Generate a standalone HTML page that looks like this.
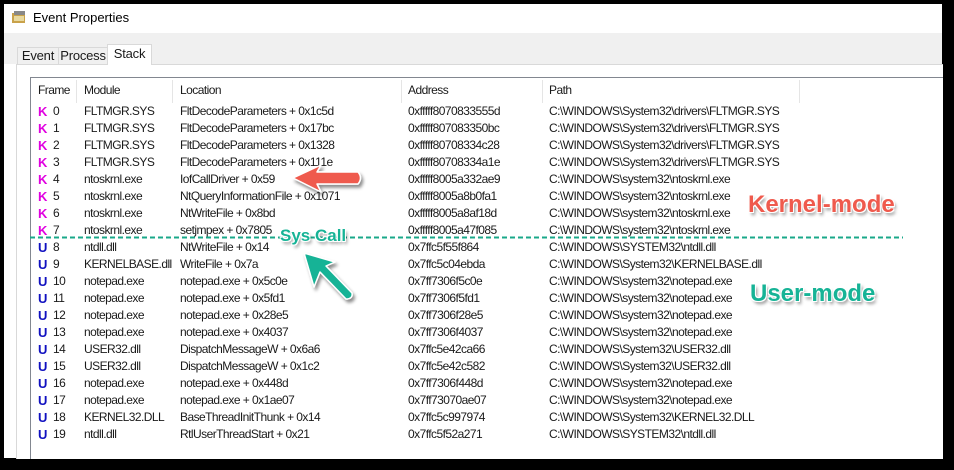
<!DOCTYPE html>
<html><head><style>
body{margin:0;width:954px;height:470px;background:#000;position:relative;overflow:hidden;font-family:"Liberation Sans",sans-serif;font-size:12px;color:#1a1a1a}
.win{position:absolute;left:4px;top:4px;width:938px;height:454px;background:#fff}
.gray{position:absolute;left:4px;top:33px;width:938px;height:31px;background:#f0f0f0}
.t{position:absolute;white-space:nowrap}
.tab{position:absolute;border:1px solid #d9d9d9;border-bottom:none;background:#f0f0f0;font-size:13px;text-align:center;box-sizing:border-box;letter-spacing:-0.2px}
.panel{position:absolute;left:16px;top:64px;width:926px;height:394px;background:#fff;border-top:1px solid #d9d9d9;border-left:1px solid #d9d9d9}
.list{position:absolute;left:30px;top:77px;width:912px;height:381px;border-top:1px solid #828790;border-left:1px solid #828790;background:#fff}
.sep{position:absolute;top:80px;width:1px;height:23px;background:#e5e5e5}
.r{position:absolute;height:17px;line-height:17px;letter-spacing:-0.55px;white-space:nowrap}
.K{color:#e000e0;font-weight:bold;font-size:13px;letter-spacing:0}
.U{color:#1010c0;font-weight:bold;font-size:13px;letter-spacing:0}
.lab{position:absolute;font-weight:bold;font-family:"Liberation Sans",sans-serif;white-space:nowrap;text-shadow:1px 1px 0 #fff,-1px -1px 0 #fff,1px -1px 0 #fff,-1px 1px 0 #fff,2px 3px 3px rgba(0,0,0,.45)}
</style></head><body>
<div class="win"></div>
<div class="gray"></div>
<svg style="position:absolute;left:11px;top:10px" width="16" height="14"><rect x="1" y="3" width="13" height="10" fill="#c9a24a"/><rect x="3" y="1" width="11" height="4" fill="#888"/><rect x="3" y="6" width="10" height="5" fill="#e8d9a0"/></svg>
<div class="t" style="left:33px;top:10px;font-size:13px;color:#000">Event Properties</div>
<div class="tab" style="left:17px;top:47px;width:42px;height:17px;line-height:16px">Event</div>
<div class="tab" style="left:58px;top:47px;width:50px;height:17px;line-height:16px">Process</div>
<div class="tab" style="left:107px;top:44px;width:45px;height:21px;line-height:18px;background:#fff;z-index:2">Stack</div>
<div class="panel"></div>
<div class="list"></div>
<div class="sep" style="left:76px"></div><div class="sep" style="left:172px"></div><div class="sep" style="left:401px"></div><div class="sep" style="left:542px"></div><div class="sep" style="left:799px"></div>
<div class="r" style="top:82px;left:38px">Frame</div>
<div class="r" style="top:82px;left:84px">Module</div>
<div class="r" style="top:82px;left:180px">Location</div>
<div class="r" style="top:82px;left:408px">Address</div>
<div class="r" style="top:82px;left:549px">Path</div>
<div id="rows"></div>
<script>
var d=[
["K","FLTMGR.SYS","FltDecodeParameters + 0x1c5d","0xfffff8070833555d","C:\\WINDOWS\\System32\\drivers\\FLTMGR.SYS"],
["K","FLTMGR.SYS","FltDecodeParameters + 0x17bc","0xfffff807083350bc","C:\\WINDOWS\\System32\\drivers\\FLTMGR.SYS"],
["K","FLTMGR.SYS","FltDecodeParameters + 0x1328","0xfffff80708334c28","C:\\WINDOWS\\System32\\drivers\\FLTMGR.SYS"],
["K","FLTMGR.SYS","FltDecodeParameters + 0x111e","0xfffff80708334a1e","C:\\WINDOWS\\System32\\drivers\\FLTMGR.SYS"],
["K","ntoskrnl.exe","IofCallDriver + 0x59","0xfffff8005a332ae9","C:\\WINDOWS\\system32\\ntoskrnl.exe"],
["K","ntoskrnl.exe","NtQueryInformationFile + 0x1071","0xfffff8005a8b0fa1","C:\\WINDOWS\\system32\\ntoskrnl.exe"],
["K","ntoskrnl.exe","NtWriteFile + 0x8bd","0xfffff8005a8af18d","C:\\WINDOWS\\system32\\ntoskrnl.exe"],
["K","ntoskrnl.exe","setjmpex + 0x7805","0xfffff8005a47f085","C:\\WINDOWS\\system32\\ntoskrnl.exe"],
["U","ntdll.dll","NtWriteFile + 0x14","0x7ffc5f55f864","C:\\WINDOWS\\SYSTEM32\\ntdll.dll"],
["U","KERNELBASE.dll","WriteFile + 0x7a","0x7ffc5c04ebda","C:\\WINDOWS\\System32\\KERNELBASE.dll"],
["U","notepad.exe","notepad.exe + 0x5c0e","0x7ff7306f5c0e","C:\\WINDOWS\\system32\\notepad.exe"],
["U","notepad.exe","notepad.exe + 0x5fd1","0x7ff7306f5fd1","C:\\WINDOWS\\system32\\notepad.exe"],
["U","notepad.exe","notepad.exe + 0x28e5","0x7ff7306f28e5","C:\\WINDOWS\\system32\\notepad.exe"],
["U","notepad.exe","notepad.exe + 0x4037","0x7ff7306f4037","C:\\WINDOWS\\system32\\notepad.exe"],
["U","USER32.dll","DispatchMessageW + 0x6a6","0x7ffc5e42ca66","C:\\WINDOWS\\System32\\USER32.dll"],
["U","USER32.dll","DispatchMessageW + 0x1c2","0x7ffc5e42c582","C:\\WINDOWS\\System32\\USER32.dll"],
["U","notepad.exe","notepad.exe + 0x448d","0x7ff7306f448d","C:\\WINDOWS\\system32\\notepad.exe"],
["U","notepad.exe","notepad.exe + 0x1ae07","0x7ff73070ae07","C:\\WINDOWS\\system32\\notepad.exe"],
["U","KERNEL32.DLL","BaseThreadInitThunk + 0x14","0x7ffc5c997974","C:\\WINDOWS\\System32\\KERNEL32.DLL"],
["U","ntdll.dll","RtlUserThreadStart + 0x21","0x7ffc5f52a271","C:\\WINDOWS\\SYSTEM32\\ntdll.dll"]];
var h="";
d.forEach(function(r,i){var y=103+i*17;
h+='<div class="r '+r[0]+'" style="top:'+y+'px;left:38px">'+r[0]+'</div>'+
'<div class="r" style="top:'+y+'px;left:53px">'+i+'</div>'+
'<div class="r" style="top:'+y+'px;left:84px">'+r[1]+'</div>'+
'<div class="r" style="top:'+y+'px;left:180px">'+r[2]+'</div>'+
'<div class="r" style="top:'+y+'px;left:408px">'+r[3]+'</div>'+
'<div class="r" style="top:'+y+'px;left:549px">'+r[4]+'</div>';});
document.getElementById("rows").innerHTML=h;
</script>
<svg style="position:absolute;left:0;top:0" width="954" height="470">
<defs><filter id="sh" x="-20%" y="-20%" width="150%" height="150%"><feDropShadow dx="2" dy="3" stdDeviation="1.5" flood-opacity="0.45"/></filter></defs>
<line x1="30" y1="237.5" x2="903" y2="237.5" stroke="#1aa88a" stroke-width="2" stroke-dasharray="5,3"/>
<g filter="url(#sh)">
<path d="M293 178 L321 165 L317 172 L358 172 Q363 178 358 184 L317 184 L321 192 Z" fill="#ef5a4d" stroke="#fff" stroke-width="1.5" stroke-linejoin="round"/>
<path d="M304 253 L335 262 L326 266 L352 293 Q353 299 346 299 L320 272 L314 287 Z" fill="#16b396" stroke="#fff" stroke-width="1.5" stroke-linejoin="round"/>
</g>
</svg>
<div class="lab" style="left:280px;top:226px;font-size:17px;color:#16b396">Sys Call</div>
<div class="lab" style="left:748px;top:191px;font-size:24px;color:#ef5a4d">Kernel-mode</div>
<div class="lab" style="left:750px;top:280px;font-size:24px;color:#16b396">User-mode</div>
</body></html>
